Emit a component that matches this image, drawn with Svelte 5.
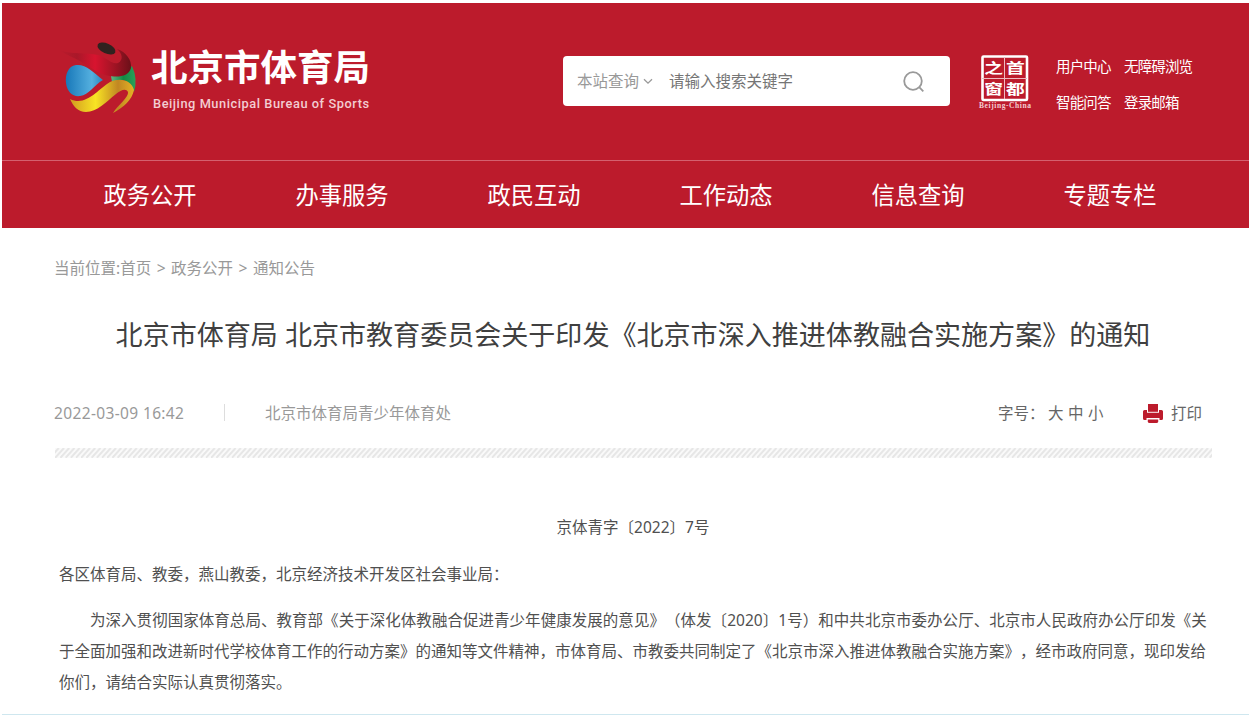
<script>
  const userLinks = ['用户中心', '无障碍浏览', '智能问答', '登录邮箱']
  const nav = ['政务公开', '办事服务', '政民互动', '工作动态', '信息查询', '专题专栏']
  const sizes = ['大', '中', '小']
</script>

<div class="page">
  <header>
    <div class="top">
      <a class="brand" href="#home">
        <svg class="emblem" viewBox="0 0 90 85" width="90" height="85">
          <defs>
            <linearGradient id="blue">
              <stop offset="0" stop-color="#1878b9" />
              <stop offset=".7" stop-color="#55b0df" />
              <stop offset="1" stop-color="#2a86c0" />
            </linearGradient>
            <linearGradient id="red">
              <stop offset="0" stop-color="#bc1b2c" />
              <stop offset=".25" stop-color="#a91829" />
              <stop offset=".5" stop-color="#d8142f" />
              <stop offset=".75" stop-color="#a51425" />
              <stop offset="1" stop-color="#6b1019" />
            </linearGradient>
            <linearGradient id="yellow">
              <stop offset="0" stop-color="#d29b20" />
              <stop offset=".4" stop-color="#f8e424" />
              <stop offset=".75" stop-color="#c18722" />
              <stop offset="1" stop-color="#e5b225" />
            </linearGradient>
            <linearGradient id="green">
              <stop offset="0" stop-color="#62b584" />
              <stop offset=".5" stop-color="#118b43" />
              <stop offset="1" stop-color="#2aa05a" />
            </linearGradient>
          </defs>
          <path d="M56 41 Q68 42 77 31 Q83 44 79 57 Q76 47 68 45 Q62 45 57 47Z" fill="url(#green)" />
          <path d="M4 15 C17 20 31 17 43 20 C51 22 57 30 63 28 C69 25 67 18 62 14 C71 17 77 25 76 33 C74 40 67 42 59 41.5 C47 41 41 36 30 29 C21 23 11 20 4 15Z" fill="url(#red)" />
          <ellipse cx="51.5" cy="13.5" rx="9.6" ry="5" transform="rotate(24 51.5 13.5)" fill="#30221f" />
          <path d="M48 45 C38 37 31 29 21 30 C13 31 10 40 11 48 C12 57 18 62 25 61 C34 60 39 50 48 45Z" fill="url(#blue)" />
          <path d="M15 64 C31 72 43 54 55 47 C66 42 77 46 79 55 C77 65 69 72 58 78 C63 70 74 62 73 57 C71 53 66 55 61 59 C51 67 42 77 31 77 C23 77 18 71 15 64Z" fill="url(#yellow)" />
        </svg>
        <span class="names">
          <strong>北京市体育局</strong>
          <em>Beijing Municipal Bureau of Sports</em>
        </span>
      </a>

      <form class="search">
        <span class="scope">本站查询</span>
        <svg class="caret" viewBox="0 0 10 7" width="10" height="7">
          <path d="M1 1.2 5 5.2 9 1.2" />
        </svg>
        <span class="hint">请输入搜索关键字</span>
        <svg class="glass" viewBox="0 0 24 24" width="24" height="24">
          <circle cx="11" cy="11" r="8.8" />
          <path d="M17.2 17.2 21.3 21.3" />
        </svg>
      </form>

      <div class="capital">
        <svg viewBox="0 0 54 56" width="54" height="56">
          <rect x="4.5" y="2.5" width="44.5" height="43.5" rx="1" fill="none" stroke="#fff" stroke-width="2.6" />
          <path d="M26.5 3V45M4 24.5H49" stroke="#eebac1" stroke-width="1" />
          <g class="seal" transform="scale(1.34 1)">
            <text x="11.6" y="18.6">之</text>
            <text x="28" y="18.6">首</text>
            <text x="11.6" y="40">窗</text>
            <text x="28" y="40">都</text>
          </g>
          <text class="latin" x="27" y="54.3" textLength="52">Beijing-China</text>
        </svg>
      </div>

      <div class="user">
        {#each userLinks as link}
          <a href="#user">{link}</a>
        {/each}
      </div>
    </div>

    <nav>
      {#each nav as item}
        <a href="#nav">{item}</a>
      {/each}
    </nav>
  </header>

  <main>
    <div class="crumbs">当前位置:首页<i>&gt;</i>政务公开<i>&gt;</i>通知公告</div>
    <h1>北京市体育局 北京市教育委员会关于印发《北京市深入推进体教融合实施方案》的通知</h1>

    <div class="meta">
      <time>2022-03-09 16:42</time>
      <span class="sep"></span>
      <span>北京市体育局青少年体育处</span>
      <div class="tools">
        <span class="label">字号：</span>
        {#each sizes as size}
          <span class="size">{size}</span>
        {/each}
        <svg viewBox="0 0 20 20" width="20" height="20">
          <path d="M5 0H15V7.8H5Z" />
          <path d="M1.5 6H4V8.8H16V6H18.5Q20 6 20 7.5V14.5Q20 16 18.5 16H16.5V14H3.5V16H1.5Q0 16 0 14.5V7.5Q0 6 1.5 6Z" />
          <path d="M4.8 15.4H15.2V17.5Q15 19 13.5 19H6.5Q5 19 4.8 17.5Z" />
        </svg>
        <span>打印</span>
      </div>
    </div>

    <svg class="stripes" width="1157" height="10">
      <defs>
        <pattern id="hatch" width="5.2" height="10" patternUnits="userSpaceOnUse">
          <path d="M-5.2 10 3.8 0M0 10 9 0M-10.4 10-1.4 0" stroke="#e6e6e6" stroke-width="2" />
        </pattern>
      </defs>
      <rect width="1157" height="10" fill="#fafafa" />
      <rect width="1157" height="10" fill="url(#hatch)" />
    </svg>

    <article>
      <p class="number">京体青字〔2022〕7号</p>
      <p>各区体育局、教委，燕山教委，北京经济技术开发区社会事业局：</p>
      <p>
        <span class="line indent">为深入贯彻国家体育总局、教育部《关于深化体教融合促进青少年健康发展的意见》（体发〔2020〕1号）和中共北京市委办公厅、北京市人民政府办公厅印发《关</span>
        <span class="line">于全面加强和改进新时代学校体育工作的行动方案》的通知等文件精神，市体育局、市教委共同制定了《北京市深入推进体教融合实施方案》，经市政府同意，现印发给</span>
        <span class="line">你们，请结合实际认真贯彻落实。</span>
      </p>
    </article>
  </main>
</div>

<style>
  :global(body) {
    background: #fff;
  }

  .page {
    box-sizing: border-box;
    width: 1247px;
    height: 715px;
    margin-left: 2px;
    padding-top: 3px;
    overflow: hidden;
    border-bottom: 1px solid #cfe7ef;
    font-family: 'Noto Sans', 'Noto Sans CJK SC', sans-serif;
    font-size: 15.5px;
    text-spacing-trim: space-all;
    white-space: nowrap;
  }

  a {
    color: #fff;
    text-decoration: none;
  }

  header {
    height: 225px;
    background: #bc1b2c;
  }

  .top {
    display: flex;
    align-items: flex-start;
    height: 157px;
    padding-left: 53px;
  }

  .brand {
    display: flex;
    width: 508px;
    padding-top: 32px;
  }

  .names {
    display: flex;
    flex-direction: column;
    padding: 6px 0 0 6px;
  }

  .names strong {
    font-size: 36.5px;
    line-height: 53px;
    font-weight: 700;
  }

  .names em {
    padding-left: 2px;
    font: 500 12.8px/20px Roboto, sans-serif;
    letter-spacing: 0.55px;
    color: #f3cdd2;
  }

  .search {
    display: flex;
    align-items: center;
    box-sizing: border-box;
    width: 387px;
    height: 50px;
    margin-top: 53px;
    padding: 0 24px 0 14px;
    border-radius: 4px;
    background: #fff;
  }

  .search span {
    margin-top: -2px;
  }

  .scope {
    color: #999;
  }

  .caret {
    margin: 0 16px 0 4px;
    fill: none;
    stroke: #999;
    stroke-width: 1.3;
  }

  .hint {
    color: #757575;
  }

  .glass {
    margin: 2px 0 0 auto;
    fill: none;
    stroke: #999;
    stroke-width: 1.8;
  }

  .capital {
    margin: 51px 0 0 28px;
  }

  .capital text {
    fill: #fff;
    text-anchor: middle;
  }

  .seal text {
    font: 700 14px 'Noto Sans CJK SC', sans-serif;
  }

  .capital .latin {
    font: 700 7.5px 'Liberation Serif', serif;
    fill: #f3cdd2;
  }

  .user {
    display: grid;
    grid-template-columns: 68px 80px;
    grid-auto-rows: 36px;
    margin: 45px 0 0 24px;
    font-size: 14.5px;
    line-height: 36px;
    letter-spacing: -0.85px;
  }

  nav {
    display: flex;
    height: 67px;
    padding-left: 52px;
    border-top: 1px solid #d4606f;
  }

  nav a {
    width: 192px;
    font-size: 23.3px;
    line-height: 69px;
    text-align: center;
  }

  main {
    width: 1158px;
    padding-left: 52px;
  }

  .crumbs {
    height: 80px;
    line-height: 80px;
    color: #999;
  }

  .crumbs i {
    margin: 0 5.5px;
    font-style: normal;
  }

  h1 {
    margin: 0;
    font-size: 27.05px;
    font-weight: 400;
    line-height: 54px;
    text-align: center;
    color: #404040;
  }

  .meta {
    display: flex;
    align-items: center;
    height: 24px;
    margin-top: 38px;
    color: #999;
  }

  time {
    width: 170px;
    padding-top: 1px;
    letter-spacing: 0.36px;
  }

  .sep {
    width: 1px;
    height: 17px;
    margin-right: 40px;
    background: #ddd;
  }

  .tools {
    display: flex;
    align-items: center;
    margin-left: auto;
    padding-right: 10px;
    color: #666;
  }

  .label {
    width: 50px;
  }

  .size {
    width: 20px;
  }

  .tools svg {
    margin: 4px 8px 0 35px;
    fill: #bc1b2c;
  }

  .stripes {
    display: block;
    margin: 24px 0 0 1px;
  }

  article {
    padding: 54.4px 0 0 5px;
    line-height: 31px;
    color: #505050;
  }

  p {
    margin: 0 0 15.5px;
  }

  .number {
    margin-left: -5px;
    text-align: center;
  }

  .line {
    display: block;
  }

  .indent {
    padding-left: 31px;
    letter-spacing: 0.04px;
  }
</style>
